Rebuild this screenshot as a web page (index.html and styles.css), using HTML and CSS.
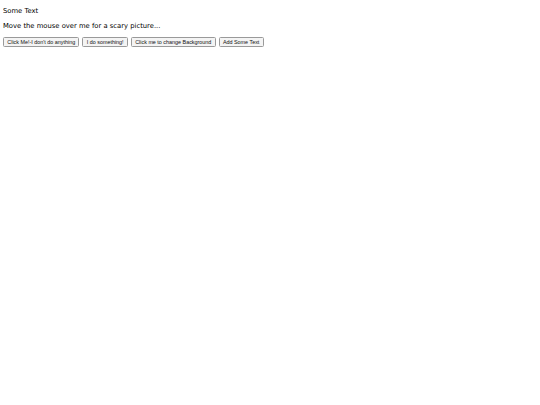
FILE: index.html
```html
<!DOCTYPE html>
<html>
<head>
<meta charset="utf-8">
<link rel="stylesheet" href="styles.css">
</head>
<body>
<p class="line">Some Text</p>
<p class="line">Move the mouse over me for a scary picture...</p>
<div class="buttons">
<button class="btn">Click Me!-I don't do anything</button>
<button class="btn">I do something!</button>
<button class="btn">Click me to change Background</button>
<button class="btn">Add Some Text</button>
</div>
</body>
</html>
```
FILE: styles.css
```css
html, body { background: #fff; }
body {
  margin: 0 3px;
  font-family: "DejaVu Sans", sans-serif;
  font-size: 6.8px;
  color: #000;
}
.line {
  margin: 7px 0;
  line-height: 8px;
}
.buttons {
  display: flex;
  gap: 3px;
  margin-top: 5px;
}
.btn {
  font-family: "Liberation Sans", Arial, sans-serif;
  font-size: 5.4px;
  height: 10px;
  padding: 0 3.3px;
  line-height: 8px;
  background: #f4f4f4;
  border: 1px solid #9a9a9a;
  border-radius: 1.5px;
  color: #111;
}
```
